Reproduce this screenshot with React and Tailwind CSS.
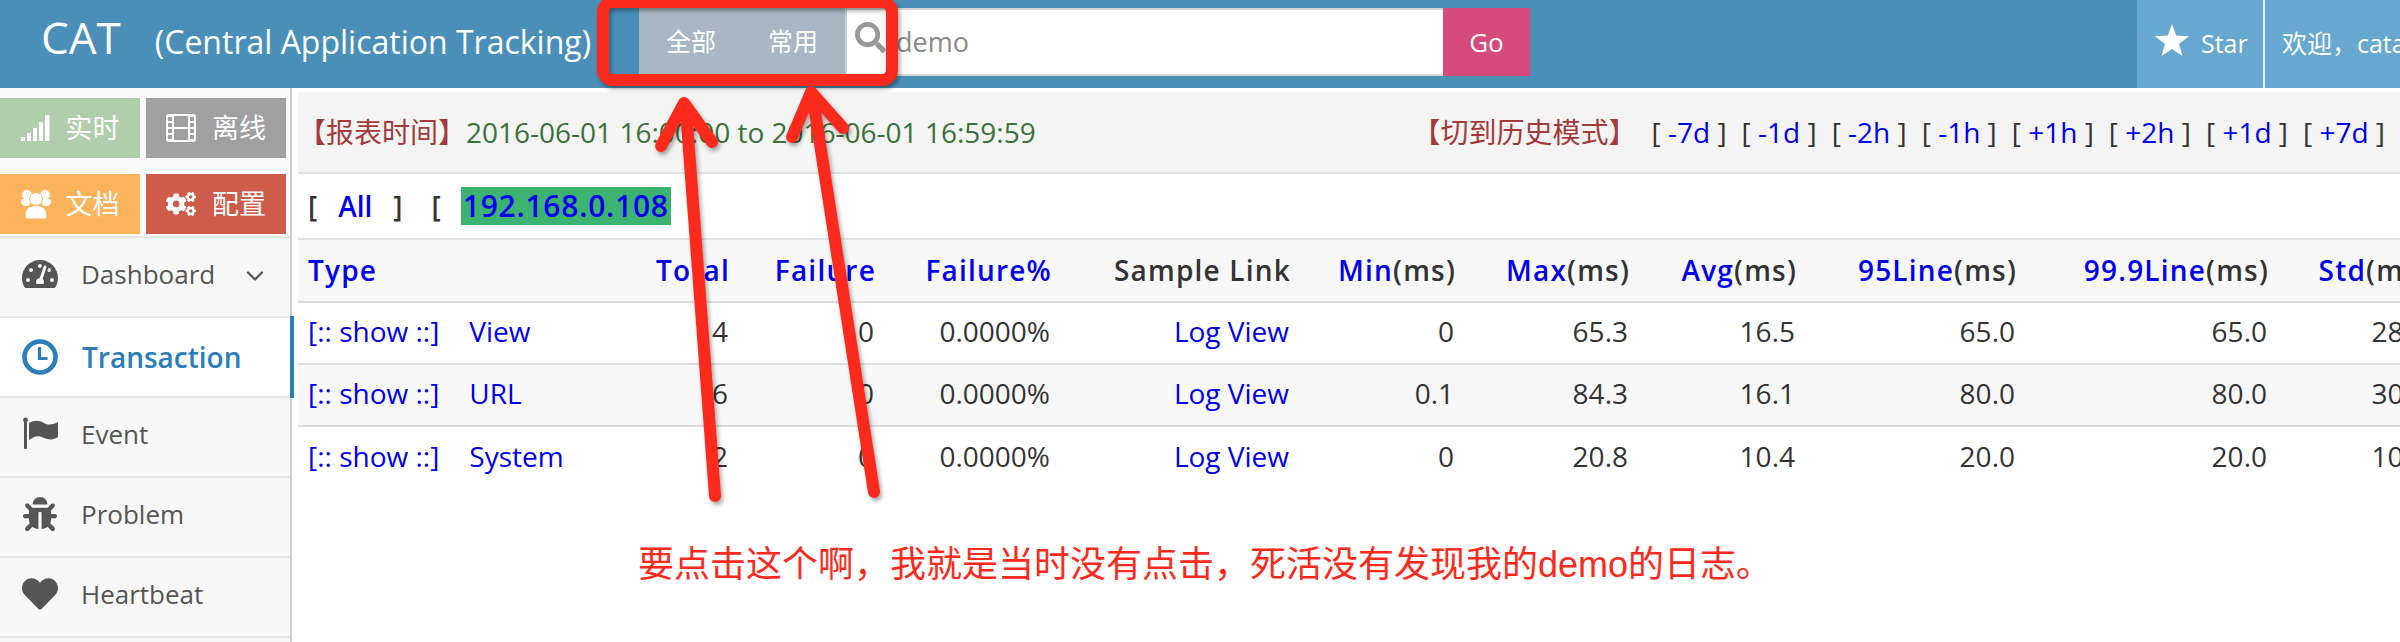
import React from "react";
import { FaCogs, FaTachometerAlt, FaBug, FaHeart, FaSearch } from "react-icons/fa";
import { ChevronDown } from "lucide-react";

const FONT = "font-['Open_Sans','Noto_Sans_CJK_SC',sans-serif]";

function SignalIcon() {
  return (
    <svg width="29" height="26" viewBox="0 0 29 26" fill="currentColor">
      <rect x="0" y="22" width="4" height="4" />
      <rect x="6" y="18" width="4" height="8" />
      <rect x="12" y="13" width="4" height="13" />
      <rect x="18" y="7" width="4" height="19" />
      <rect x="24" y="0" width="4.5" height="26" />
    </svg>
  );
}

function FilmIcon() {
  return (
    <svg width="30" height="28" viewBox="0 0 30 28">
      <rect width="30" height="28" rx="3" fill="#fff" />
      <rect x="8" y="2" width="14" height="11" fill="#a0a0a0" />
      <rect x="8" y="15" width="14" height="11" fill="#a0a0a0" />
      {[3, 9, 15, 21].map((y) => (
        <g key={y} fill="#a0a0a0">
          <rect x="2" y={y} width="4" height="4" />
          <rect x="24" y={y} width="4" height="4" />
        </g>
      ))}
    </svg>
  );
}

function UsersIcon() {
  return (
    <svg width="30" height="30" viewBox="0 0 30 30" fill="#fff">
      <circle cx="6" cy="6" r="5" />
      <circle cx="24" cy="6" r="5" />
      <ellipse cx="5" cy="13" rx="5" ry="4" />
      <ellipse cx="25" cy="13" rx="5" ry="4" />
      <circle cx="15" cy="10" r="6.5" stroke="#fbb35c" />
      <path d="M4 27 C4 20 8 16.5 15 16.5 C22 16.5 26 20 26 27 C26 29 25 30 23 30 H7 C5 30 4 29 4 27Z" stroke="#fbb35c" />
    </svg>
  );
}

function ClockIcon() {
  return (
    <svg width="36" height="36" viewBox="0 0 36 36" fill="none" stroke="currentColor">
      <circle cx="18" cy="18" r="15.5" strokeWidth="4.6" />
      <path d="M17.5 8 V19.5 H25.5" strokeWidth="3.2" />
    </svg>
  );
}

function FlagIcon() {
  return (
    <svg width="36" height="34" viewBox="0 0 36 34" fill="currentColor">
      <circle cx="3.5" cy="3" r="2.4" />
      <rect x="2" y="3" width="3" height="29" rx="1" />
      <path d="M7 6 C12 3 17 3 22 6 C27 9 32 7 36 5 V20 C32 23 27 23 22 21 C17 18 12 19 7 23Z" />
    </svg>
  );
}

function StarIcon() {
  return (
    <svg width="34" height="32" viewBox="0 0 34 32" fill="currentColor">
      <polygon points="17,0 21.2,11.6 34,12.2 24,20 27.5,32 17,25 6.5,32 10,20 0,12.2 12.8,11.6" />
    </svg>
  );
}

const shortcuts = [
  { label: "实时", bg: "bg-[#b0ceab]", gap: "gap-[16px]", icon: <SignalIcon /> },
  { label: "离线", bg: "bg-[#a0a0a0]", gap: "gap-[16px]", icon: <FilmIcon /> },
  { label: "文档", bg: "bg-[#fbb35c]", gap: "gap-[15px]", icon: <UsersIcon /> },
  { label: "配置", bg: "bg-[#cf5c4b]", gap: "gap-[16px]", icon: <FaCogs size={30} /> },
];

const menu = [
  { label: "Dashboard", icon: <FaTachometerAlt size={36} />, arrow: true },
  { label: "Transaction", icon: <ClockIcon />, active: true },
  { label: "Event", icon: <FlagIcon /> },
  { label: "Problem", icon: <FaBug size={34} /> },
  { label: "Heartbeat", icon: <FaHeart size={36} /> },
];

const steps = ["-7d", "-1d", "-2h", "-1h", "+1h", "+2h", "+1d", "+7d"];

const rows = [
  ["View", "4", "0", "0", "65.3", "16.5", "65.0", "65.0", "28.5"],
  ["URL", "6", "0", "0.1", "84.3", "16.1", "80.0", "80.0", "30.2"],
  ["System", "2", "0", "0", "20.8", "10.4", "20.0", "20.0", "10.4"],
];

function Ms({ name, width }) {
  return (
    <th className={`${width} pl-[10px] pr-[8px] pb-[2px] text-right font-semibold text-[#333]`}>
      <a className="text-[#0000ee]">{name}</a>(ms)
    </th>
  );
}

function Annotation() {
  return (
    <>
      <svg className="absolute left-0 top-0 pointer-events-none drop-shadow-[2px_3px_2px_rgba(0,0,0,0.35)]" width="2400" height="642" fill="none" stroke="#fb2a1c" strokeLinecap="round" strokeLinejoin="round">
        <rect x="603" y="2" width="289" height="78" rx="10" strokeWidth="12" />
        <path d="M715 496 L686 110" strokeWidth="12" />
        <path d="M661 146 L684 103 L712 142" strokeWidth="12" />
        <path d="M874 492 L814 105" strokeWidth="12" />
        <path d="M792 137 L811 92 L843 128" strokeWidth="12" />
      </svg>
      <div className="absolute left-[638px] top-[541px] font-['Liberation_Sans','Noto_Sans_CJK_SC',sans-serif] text-[36px] leading-[48px] text-[#fb2a1c] whitespace-nowrap">
        要点击这个啊，我就是当时没有点击，死活没有发现我的demo的日志。
      </div>
    </>
  );
}

export default function App() {
  return (
    <div className={`${FONT} relative w-[2400px] h-[642px] overflow-hidden bg-white text-[28px] text-[#333]`}>
      <header className="flex h-[88px] bg-[#4a8fb8] text-white">
        <div className="flex items-baseline w-[610px] pl-[41px] pt-[4px] whitespace-nowrap">
          <span className="text-[44px]">CAT</span>
          <span className="ml-[34px] text-[32px]">(Central Application Tracking)</span>
        </div>
        <div className="flex h-[68px] mt-[8px] ml-[29px]">
          <div className="flex items-center w-[206px] bg-[#a8b7c3] text-[25px] pl-[27px] gap-[52px]">
            <span>全部</span>
            <span>常用</span>
          </div>
          <div className="flex items-center w-[598px] bg-white border-y-2 border-[#d5d5d5] border-l-2 border-l-[#c8d0d6]">
            <FaSearch size={31} className="ml-[8px] -mt-[10px] text-[#999]" />
            <span className="ml-[10px] text-[27px] text-[#888]">demo</span>
          </div>
          <div className="flex items-center justify-center w-[87px] bg-[#d54b7b] text-[26px]">Go</div>
        </div>
        <div className="ml-auto flex w-[263px] bg-[#67a8d0] whitespace-nowrap overflow-hidden">
          <div className="flex items-center shrink-0 w-[128px] pl-[18px] gap-[12px] border-r-2 border-[#e4eef5] text-[25px]">
            <span className="-mt-[8px]"><StarIcon /></span>
            <span>Star</span>
          </div>
          <div className="flex items-center pl-[17px] text-[25px]">欢迎，catalina</div>
        </div>
      </header>

      <div className="flex h-[554px]">
        <aside className="w-[292px] h-full shrink-0 bg-[#f8f8f8] border-r-2 border-[#cccccc]">
          <div className="grid grid-cols-[140px_140px] gap-x-[6px] gap-y-[14px] h-[150px] pt-[10px] bg-[#fafafa] border-b-2 border-[#e5e5e5]">
            {shortcuts.map((s) => (
              <div key={s.label} className={`${s.bg} ${s.gap} h-[60px] flex items-center justify-center text-white text-[27px]`}>
                {s.icon}
                <span>{s.label}</span>
              </div>
            ))}
          </div>
          {menu.map((m) => (
            <div
              key={m.label}
              className={`relative flex items-center h-[80px] border-b-2 border-[#e5e5e5] ${m.active ? "bg-white text-[#2b7dbc] font-semibold" : "text-[#555] pb-[6px]"}`}
            >
              <span className="flex justify-center w-[36px] ml-[22px] mr-[23px]">{m.icon}</span>
              <span className={m.active ? "text-[28px] ml-[1px]" : "text-[26px]"}>{m.label}</span>
              {m.arrow && <ChevronDown size={28} strokeWidth={2} className="absolute left-[241px] top-[24px]" />}
              {m.active && <span className="absolute -right-[4px] -top-[2px] w-[4px] h-[82px] bg-[#2b7dbc]" />}
            </div>
          ))}
        </aside>

        <main className="flex-1 min-w-0 pl-[6px] pt-[4px]">
          <div className="flex items-center justify-between h-[82px] bg-[#f4f4f4] border-b-2 border-[#e2e2e2] whitespace-nowrap">
            <div className="flex items-center">
              <span className="text-[#a33a3a]">【报表时间】</span>
              <span className="text-[#3a7238]">2016-06-01 16:00:00 to 2016-06-01 16:59:59</span>
            </div>
            <div className="flex items-center pr-[15px]">
              <span className="text-[#a33a3a] mr-[15px]">【切到历史模式】</span>
              <div className="flex gap-[15px]">
                {steps.map((s) => (
                  <span key={s}>[ <a className="text-[#0000ee]">{s}</a> ]</span>
                ))}
              </div>
            </div>
          </div>

          <div className="flex items-center h-[66px] pl-[10px] border-b-2 border-[#e2e2e2] whitespace-nowrap font-semibold">
            <span>[</span>
            <a className="ml-[21px] text-[#0000ee]">All</a>
            <span className="ml-[21px]">]</span>
            <span className="ml-[29px]">[</span>
            <a className="ml-[20px] px-[2px] h-[38px] leading-[38px] bg-[#3cb371] text-[#0000ee] text-[30px] tracking-[0.75px]">192.168.0.108</a>
          </div>

          <table className="table-fixed w-[2139px] border-collapse whitespace-nowrap">
            <thead>
              <tr className="h-[62px] bg-[#f8f8f8] border-b-2 border-[#dcdcdc] tracking-[1.2px]">
                <th className="w-[340px] pl-[10px] pr-[8px] pb-[2px] text-left font-semibold text-[#0000ee]">Type</th>
                <th className="w-[100px] pl-[10px] pr-[8px] pb-[2px] text-right font-semibold text-[#0000ee]">Total</th>
                <th className="w-[146px] pl-[10px] pr-[8px] pb-[2px] text-right font-semibold text-[#0000ee]">Failure</th>
                <th className="w-[176px] pl-[10px] pr-[8px] pb-[2px] text-right font-semibold text-[#0000ee]">Failure%</th>
                <th className="w-[239px] pl-[10px] pr-[8px] pb-[2px] text-right font-semibold text-[#333]">Sample Link</th>
                <Ms name="Min" width="w-[165px]" />
                <Ms name="Max" width="w-[174px]" />
                <Ms name="Avg" width="w-[167px]" />
                <Ms name="95Line" width="w-[220px]" />
                <Ms name="99.9Line" width="w-[252px]" />
                <Ms name="Std" width="w-[160px]" />
              </tr>
            </thead>
            <tbody>
              {rows.map((r, i) => (
                <tr key={r[0]} className={`h-[62px] ${i === 1 ? "bg-[#f8f8f8]" : ""} ${i < 2 ? "border-b-2 border-[#dcdcdc]" : ""}`}>
                  <td className="px-[10px] pb-[4px] text-[#0000ee]">
                    [:: show ::]<span className="ml-[30px]">{r[0]}</span>
                  </td>
                  <td className="px-[10px] pb-[4px] text-right">{r[1]}</td>
                  <td className="px-[10px] pb-[4px] text-right">{r[2]}</td>
                  <td className="px-[10px] pb-[4px] text-right">0.0000%</td>
                  <td className="px-[10px] pb-[4px] text-right text-[#0000ee]">Log View</td>
                  {r.slice(3).map((v, j) => (
                    <td key={j} className="px-[10px] pb-[4px] text-right">{v}</td>
                  ))}
                </tr>
              ))}
            </tbody>
          </table>
        </main>
      </div>

      <Annotation />
    </div>
  );
}
